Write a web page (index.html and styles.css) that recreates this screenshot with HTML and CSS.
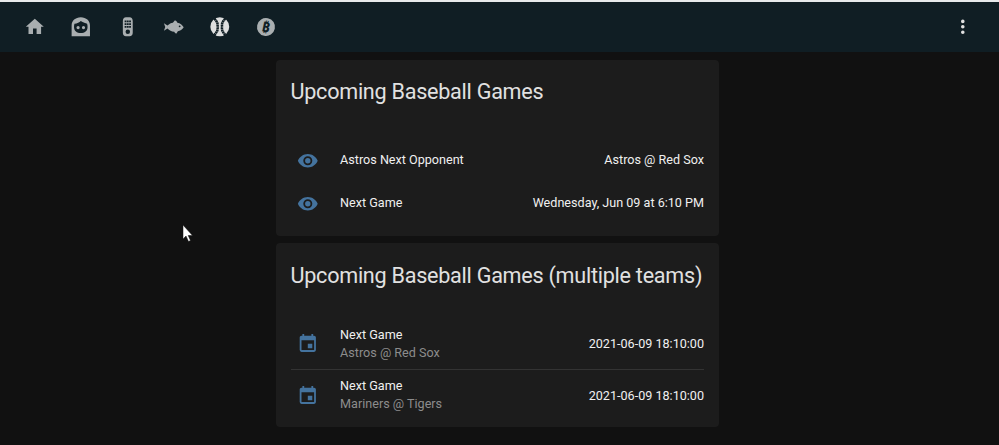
FILE: index.html
```html
<!DOCTYPE html>
<html lang="en">
<head>
    <meta charset="UTF-8">
    <meta name="viewport" content="width=device-width, initial-scale=1.0">
    <title>Upcoming Baseball Games</title>
    <link rel="stylesheet" href="styles.css">
</head>
<body>

    <!-- Top bar with view tabs -->
    <header class="toolbar">
        <nav class="tabs">
            <div class="tab">
                <svg viewBox="0 0 24 24"><path d="M10,20V14H14V20H19V12H22L12,3L2,12H5V20H10Z"/></svg>
            </div>
            <div class="tab">
                <svg viewBox="0 0 24 24"><path fill-rule="evenodd" d="M12,1.500C6,1.500 1.800,5.500 1.800,10.500V22.500H22.200V10.500C22.200,5.500 18,1.500 12,1.500ZM12,5.500C14.500,7 17.500,8 19,8.500C19.500,10 19.500,11 19.500,12.500C19.500,16.500 16.300,19 12,19C7.700,19 4.500,16.500 4.500,12.500C4.500,11 4.500,10 5,8.500C8,8.300 10.500,7 12,5.500ZM9,11A1.800,1.800 0 0,1 10.800,12.800A1.800,1.800 0 0,1 9,14.600A1.800,1.800 0 0,1 7.200,12.800A1.800,1.800 0 0,1 9,11ZM15,11A1.800,1.800 0 0,1 16.800,12.800A1.800,1.800 0 0,1 15,14.600A1.800,1.800 0 0,1 13.200,12.800A1.800,1.800 0 0,1 15,11Z"/></svg>
            </div>
            <div class="tab">
                <svg viewBox="0 0 24 24"><path fill-rule="evenodd" d="M10,1.500H14C16.200,1.500 17.500,3.300 17.500,5.500V18.500C17.500,20.700 16.200,22.500 14,22.500H10C7.800,22.500 6.500,20.700 6.500,18.500V5.500C6.500,3.300 7.800,1.500 10,1.500ZM8.500,5V7H10.500V5ZM11,5V7H13V5ZM13.500,5V7H15.500V5ZM8.500,8V10H10.500V8ZM11,8V10H13V8ZM13.500,8V10H15.500V8ZM8.500,11V13H10.500V11ZM11,11V13H13V11ZM13.500,11V13H15.500V11ZM12,15A2.500,2.500 0 0,0 9.500,17.500A2.500,2.500 0 0,0 12,20A2.500,2.500 0 0,0 14.500,17.500A2.500,2.500 0 0,0 12,15Z"/></svg>
            </div>
            <div class="tab">
                <svg viewBox="0 0 24 24"><path fill-rule="evenodd" d="M1,8L5,10.500C7,8.700 9,7.800 11,7.500L13,5C14,5 15.500,5.500 16,7.500C19,8 21.500,10 23,12.500C21.500,15 19,16.500 16.500,17L15,19.500C14,19.500 13,18.500 12.500,17.500C9.500,17.500 7,16 5,14L1,16.500L2.500,12.200ZM18.500,10.500A1,1 0 0,0 17.500,11.500A1,1 0 0,0 18.500,12.500A1,1 0 0,0 19.500,11.500A1,1 0 0,0 18.500,10.500Z"/></svg>
            </div>
            <div class="tab">
                <svg viewBox="0 0 24 24"><circle cx="12" cy="12" r="10.500" class="ball"/><path class="seam" d="M6,3C9.500,7 10,9 9.400,12C10,15 9.500,17 6,21M18,3C14.500,7 14,9 14.600,12C14,15 14.500,17 18,21"/></svg>
            </div>
            <div class="tab">
                <div class="coin">₿</div>
            </div>
        </nav>
        <div class="menu">
            <svg viewBox="0 0 24 24"><path d="M12,16A2,2 0 0,1 14,18A2,2 0 0,1 12,20A2,2 0 0,1 10,18A2,2 0 0,1 12,16M12,10A2,2 0 0,1 14,12A2,2 0 0,1 12,14A2,2 0 0,1 10,12A2,2 0 0,1 12,10M12,4A2,2 0 0,1 14,6A2,2 0 0,1 12,8A2,2 0 0,1 10,6A2,2 0 0,1 12,4Z"/></svg>
        </div>
    </header>

    <main class="view">
        <section class="card card-first">
            <h1 class="card-title">Upcoming Baseball Games</h1>
            <div class="rows">
                <div class="row">
                    <svg class="state-icon" viewBox="0 0 24 24"><path d="M12,9A3,3 0 0,0 9,12A3,3 0 0,0 12,15A3,3 0 0,0 15,12A3,3 0 0,0 12,9M12,17A5,5 0 0,1 7,12A5,5 0 0,1 12,7A5,5 0 0,1 17,12A5,5 0 0,1 12,17M12,4.500C7,4.500 2.730,7.610 1,12C2.730,16.390 7,19.500 12,19.500C17,19.500 21.270,16.390 23,12C21.270,7.610 17,4.500 12,4.500Z"/></svg>
                    <div class="row-name">Astros Next Opponent</div>
                    <div class="row-value">Astros @ Red Sox</div>
                </div>
                <div class="row">
                    <svg class="state-icon" viewBox="0 0 24 24"><path d="M12,9A3,3 0 0,0 9,12A3,3 0 0,0 12,15A3,3 0 0,0 15,12A3,3 0 0,0 12,9M12,17A5,5 0 0,1 7,12A5,5 0 0,1 12,7A5,5 0 0,1 17,12A5,5 0 0,1 12,17M12,4.500C7,4.500 2.730,7.610 1,12C2.730,16.390 7,19.500 12,19.500C17,19.500 21.270,16.390 23,12C21.270,7.610 17,4.500 12,4.500Z"/></svg>
                    <div class="row-name">Next Game</div>
                    <div class="row-value">Wednesday, Jun 09 at 6:10 PM</div>
                </div>
            </div>
        </section>

        <section class="card card-second">
            <h1 class="card-title">Upcoming Baseball Games (multiple teams)</h1>
            <div class="rows">
                <div class="row event">
                    <svg class="state-icon" viewBox="0 0 24 24"><path d="M19,19H5V8H19M16,1V3H8V1H6V3H5C3.890,3 3,3.890 3,5V19A2,2 0 0,0 5,21H19A2,2 0 0,0 21,19V5C21,3.890 20.100,3 19,3H18V1M17,12H12V17H17V12Z"/></svg>
                    <div class="row-name">Next Game<div class="row-sub">Astros @ Red Sox</div></div>
                    <div class="row-value">2021-06-09 18:10:00</div>
                </div>
                <div class="row event">
                    <svg class="state-icon" viewBox="0 0 24 24"><path d="M19,19H5V8H19M16,1V3H8V1H6V3H5C3.890,3 3,3.890 3,5V19A2,2 0 0,0 5,21H19A2,2 0 0,0 21,19V5C21,3.890 20.100,3 19,3H18V1M17,12H12V17H17V12Z"/></svg>
                    <div class="row-name">Next Game<div class="row-sub">Mariners @ Tigers</div></div>
                    <div class="row-value">2021-06-09 18:10:00</div>
                </div>
            </div>
        </section>
    </main>

    <!-- Mouse pointer caught in the screenshot -->
    <svg class="pointer" viewBox="0 0 12 19"><path d="M1,1V15L4,12L6.500,17.500L8.500,16.500L6.200,11.500H10.500Z"/></svg>

</body>
</html>
```

FILE: styles.css
```css
body {
    font-family: Roboto, "Liberation Sans", sans-serif;
    margin: 0;
    height: 445px;
    overflow: hidden;
    background-color: #111111;
    color: #e1e1e1;
}
.toolbar {
    display: flex;
    justify-content: space-between;
    align-items: center;
    height: 50px;
    padding: 0 25px 0 12px;
    background-color: #101e24;
    border-top: 2px solid #e8eaeb;
}
.tabs {
    display: flex;
    align-items: center;
}
.tab {
    width: 46.200px;
    height: 24px;
    display: flex;
    justify-content: center;
    align-items: center;
}
.tab svg {
    width: 21.600px;
    height: 21.600px;
    fill: #a9aeb0;
}
.tab .ball {
    fill: #dedfdf;
}
.tab .seam {
    fill: none;
    stroke: #101e24;
    stroke-width: 2.800;
    stroke-dasharray: 2.200 0.400;
}
.coin {
    width: 18px;
    height: 18px;
    border-radius: 50%;
    background-color: #a9aeb0;
    color: #101e24;
    font-family: "Noto Sans", "DejaVu Sans", sans-serif;
    font-size: 14px;
    font-weight: 700;
    line-height: 18px;
    text-align: center;
    transform: rotate(12deg);
}
.menu {
    width: 21.600px;
    height: 21.600px;
}
.menu svg {
    width: 21.600px;
    height: 21.600px;
    fill: #e1e1e1;
}
.view {
    display: flex;
    flex-direction: column;
    align-items: center;
    gap: 7px;
    padding: 8px 4px 0 0;
}
.card {
    width: 443px;
    box-sizing: border-box;
    padding: 16px 15px 0 14.500px;
    background-color: #1c1c1c;
    border-radius: 4px;
}
.card-first {
    height: 176px;
}
.card-second {
    height: 184px;
    padding-top: 17px;
}
.card-title {
    margin: 0 0 30px;
    font-size: 21.600px;
    font-weight: 400;
    letter-spacing: -0.260px;
    line-height: 32px;
    white-space: nowrap;
}
.card-second .card-title {
    margin-bottom: 26px;
}
.row {
    display: flex;
    align-items: center;
    height: 43px;
    font-size: 12.600px;
    color: #f0f0f0;
}
.row.event {
    height: 51px;
    box-sizing: border-box;
}
.row.event + .row.event {
    border-top: 1px solid #333333;
}
.state-icon {
    width: 21.600px;
    height: 21.600px;
    margin: 0 22px 0 6px;
    flex-shrink: 0;
    fill: #44739e;
}
.card-first .state-icon,
.row.event + .row.event .state-icon {
    margin-top: 2px;
}
.row-name {
    flex: 1;
    line-height: 18px;
}
.row-sub {
    color: #8c8c8c;
}
.row-value {
    text-align: right;
}
.pointer {
    position: absolute;
    top: 224px;
    left: 182px;
    width: 12px;
    height: 19px;
    fill: #ffffff;
    stroke: #111111;
    stroke-width: 0.500;
}
```
